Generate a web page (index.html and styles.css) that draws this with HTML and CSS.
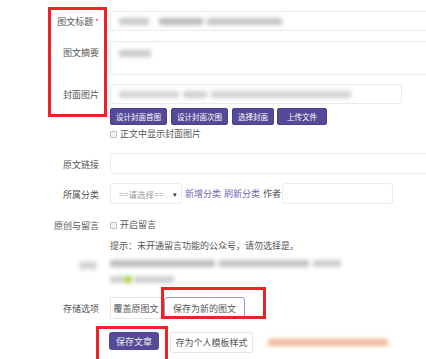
FILE: index.html
```html
<!DOCTYPE html>
<html lang="zh">
<head>
<meta charset="utf-8">
<link rel="stylesheet" href="styles.css">
</head>
<body>
<div class="page">
  <div class="form">
    <div class="row r-title">
      <div class="lbl">图文标题<span class="req">*</span></div>
      <div class="field"><div class="input wide"><span class="blur b1"></span><span class="blur b2"></span><span class="blur b3"></span></div></div>
    </div>
    <div class="row r-summary">
      <div class="lbl top">图文摘要</div>
      <div class="field"><div class="textarea"><span class="blur b4"></span></div></div>
    </div>
    <div class="row r-cover">
      <div class="lbl">封面图片</div>
      <div class="field"><div class="input cover"><span class="blur b5"></span><span class="blur b6"></span><span class="blur b7"></span></div></div>
    </div>
    <div class="row r-btns">
      <div class="lbl"></div>
      <div class="field btns">
        <span class="btn pbtn w57">设计封面首图</span>
        <span class="btn pbtn w57">设计封面次图</span>
        <span class="btn pbtn w42">选择封面</span>
        <span class="btn pbtn w50">上传文件</span>
      </div>
    </div>
    <div class="row r-check">
      <div class="lbl"></div>
      <div class="field"><span class="chk"></span><span class="ctext">正文中显示封面图片</span></div>
    </div>
    <div class="row r-link">
      <div class="lbl">原文链接</div>
      <div class="field"><div class="input wide link"></div></div>
    </div>
    <div class="row r-cat">
      <div class="lbl">所属分类</div>
      <div class="field cat">
        <div class="select"><span>==请选择==</span><span class="arrow">▾</span></div>
        <span class="lnk">新增分类</span>
        <span class="lnk">刷新分类</span>
        <span class="author">作者</span>
        <div class="input author-in"></div>
      </div>
    </div>
    <div class="row r-orig">
      <div class="lbl">原创与留言</div>
      <div class="field"><span class="chk"></span><span class="ctext">开启留言</span></div>
    </div>
    <div class="row r-hint">
      <div class="lbl"></div>
      <div class="field hint">提示：未开通留言功能的公众号，请勿选择是。</div>
    </div>
    <div class="row r-blur">
      <div class="lbl"><span class="blur b8"></span></div>
      <div class="field blurs">
        <div class="bline"><span class="blur b9"></span><span class="blur b10"></span><span class="blur b11"></span></div>
        <div class="bline"><span class="blur b12"></span><span class="blur green"></span><span class="blur b13"></span></div>
      </div>
    </div>
    <div class="row r-store">
      <div class="lbl">存储选项</div>
      <div class="field opts">
        <span class="btn obtn">覆盖原图文</span>
        <span class="btn obtn active">保存为新的图文</span>
      </div>
    </div>
    <div class="row r-save">
      <div class="lbl"></div>
      <div class="field saves">
        <span class="btn save">保存文章</span>
        <span class="btn tpl">存为个人模板样式</span>
        <span class="blur orange"></span>
      </div>
    </div>
  </div>
  <div class="mark m1"></div>
  <div class="mark m2"></div>
  <div class="mark m3"></div>
</div>
</body>
</html>
```

FILE: styles.css
```css
html, body {
  margin: 0;
  padding: 0;
  background: #fff;
  overflow: hidden;
  width: 426px;
  height: 359px;
}
.page {
  position: relative;
  width: 426px;
  height: 359px;
  overflow: hidden;
  font-family: "Noto Sans CJK SC", "Noto Sans", sans-serif;
  font-size: 9px;
  color: #555;
}
.form {
  padding-top: 11px;
  width: 460px;
}
.row {
  display: grid;
  grid-template-columns: 99px 1fr;
  column-gap: 11px;
  align-items: center;
}
.lbl {
  text-align: right;
  line-height: 12px;
  color: #555;
  position: relative;
  padding-top: 2px;
}
.lbl.top { align-self: start; padding-top: 6px; }
.req { color: #e33; margin-left: 2px; font-size: 8px; }
.field { display: flex; align-items: center; }

.input {
  box-sizing: border-box;
  height: 20px;
  border: 1px solid #e9ecef;
  border-radius: 3px;
  background: #fff;
  display: flex;
  align-items: center;
  padding-left: 8px;
  gap: 4px;
}
.wide { width: 330px; }
.textarea {
  box-sizing: border-box;
  width: 330px;
  height: 34px;
  border: 1px solid #e9ecef;
  border-radius: 3px;
  padding: 8px 0 0 8px;
  display: flex;
}
.r-summary { margin-top: 10px; }
.r-cover { margin-top: 9px; }
.cover { width: 292px; }
.r-btns { margin-top: 4px; }
.btns { gap: 4px; }
.btn {
  box-sizing: border-box;
  display: inline-flex;
  align-items: center;
  justify-content: center;
  white-space: nowrap;
  border-radius: 2px;
}
.pbtn {
  height: 17px;
  background: #554a98;
  color: #fff;
  font-size: 7.5px;
  border: 1px solid #4a408a;
}
.w57 { width: 57px; }
.w42 { width: 42px; }
.w50 { width: 50px; margin-left: -1px; }

.r-check { margin-top: 3px; }
.chk {
  box-sizing: border-box;
  width: 7px;
  height: 7px;
  border: 1px solid #bbb;
  border-radius: 1px;
  background: #f4f4f4;
  margin-right: 3px;
}
.ctext { line-height: 12px; color: #555; }

.r-link { margin-top: 13px; }
.link { height: 21px; }
.r-cat { margin-top: 9px; }
.select {
  box-sizing: border-box;
  width: 72px;
  height: 21px;
  border: 1px solid #e9ecef;
  border-radius: 3px;
  display: flex;
  align-items: center;
  justify-content: space-between;
  padding: 0 4px 0 8px;
  color: #999;
  font-size: 8.5px;
}
.arrow { color: #333; font-size: 7px; }
.lnk { color: #7068b4; margin-left: 3px; }
.lnk + .lnk { margin-left: 3px; }
.author { margin-left: 3px; color: #555; }
.author-in { width: 111px; height: 21px; margin-left: 1px; }

.r-orig { margin-top: 14px; }
.r-hint { margin-top: 8px; }
.hint { line-height: 12px; color: #555; }

.r-blur { margin-top: 6px; align-items: start; }
.blurs { flex-direction: column; align-items: flex-start; gap: 6px; }
.bline { display: flex; gap: 4px; height: 10px; align-items: center; }

.blur {
  display: inline-block;
  height: 7px;
  background: #c9c9c9;
  filter: blur(2px);
  border-radius: 1px;
}
.b1 { width: 30px; }
.b2 { width: 44px; background: #b8b8b8; margin-left: 6px; }
.b3 { width: 75px; background: #c4c4c4; }
.b4 { width: 32px; }
.b5 { width: 60px; background: #d4d4d4; }
.b6 { width: 24px; background: #cfcfcf; }
.b7 { width: 140px; background: #d2d2d2; }
.b8 { width: 18px; margin-right: 2px; margin-top: 0; background: #d0d0d0; }
.b9 { width: 105px; background: #bcbcbc; }
.b10 { width: 90px; background: #c2c2c2; }
.b11 { width: 28px; background: #cdcdcd; }
.b12 { width: 14px; background: #cfcfcf; }
.green { width: 8px; background: #a3d34a; margin-left: -4px; }
.b13 { width: 40px; background: #cfcfcf; margin-left: -2px; }

.r-store { margin-top: 13px; }
.opts { gap: 2px; }
.obtn {
  height: 22px;
  border: 1px solid #e6e6e6;
  background: #fff;
  color: #555;
  padding: 0 4px;
  width: 52px;
}
.active {
  width: 81px;
  border: 1px solid #9d96cc;
  border-radius: 3px;
}
.r-save { margin-top: 13px; }
.saves { align-items: flex-start; }
.save {
  height: 18px;
  width: 50px;
  margin-left: -1px;
  background: #554a98;
  color: #eee;
  border-radius: 3px;
}
.tpl {
  height: 21px;
  width: 83px;
  margin-left: 11px;
  border: 1px solid #e6e6e6;
  color: #555;
  background: #fff;
}
.orange {
  width: 120px;
  height: 7px;
  margin-left: 15px;
  margin-top: 7px;
  background: #f5b79b;
  filter: blur(2px);
}

.mark {
  position: absolute;
  box-sizing: border-box;
  border: 3px solid #ec2227;
}
.m1 { left: 48px; top: 7px; width: 59px; height: 110px; }
.m2 { left: 161px; top: 287px; width: 105px; height: 32px; }
.m3 { left: 96px; top: 326px; width: 72px; height: 45px; }
```
